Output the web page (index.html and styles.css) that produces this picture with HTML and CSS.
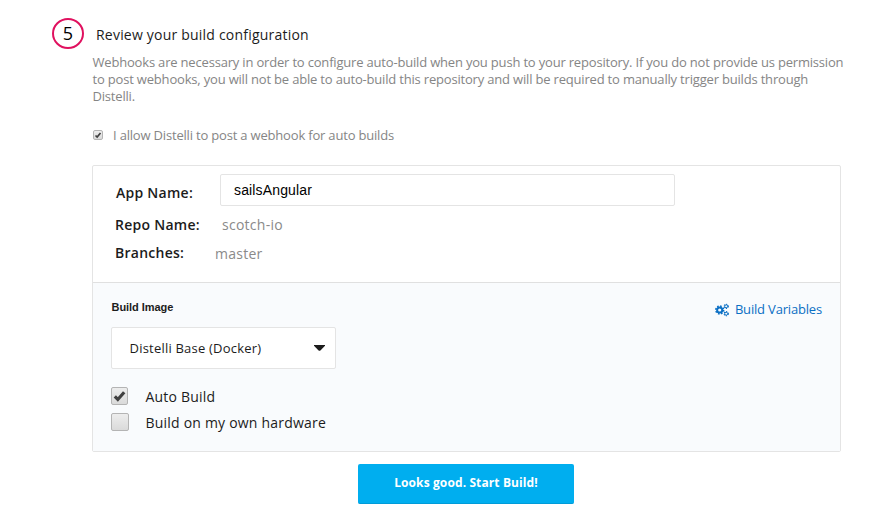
FILE: index.html
```html
<!DOCTYPE html>
<html lang="en">
<head>
<meta charset="utf-8">
<title>Build configuration</title>
<link rel="stylesheet" href="styles.css">
</head>
<body>
<main class="step">
  <header class="step-head">
    <span class="step-number">5</span>
    <h1 class="step-title">Review your build configuration</h1>
  </header>
  <div class="content">
    <p class="intro">Webhooks are necessary in order to configure auto-build when you push to your repository. If you do not provide us permission<br>to post webhooks, you will not be able to auto-build this repository and will be required to manually trigger builds through<br>Distelli.</p>
    <div class="allow">
      <span class="check check-small"><svg viewBox="0 0 16 16"><path d="M3 9 6.3 12.2 13 4"/></svg></span>
      <span>I allow Distelli to post a webhook for auto builds</span>
    </div>
    <section class="panel">
      <div class="details">
        <div class="row row-app"><span class="label">App Name:</span><div class="field">sailsAngular</div></div>
        <div class="row row-repo"><span class="label">Repo Name:</span><span class="value">scotch-io</span></div>
        <div class="row row-branch"><span class="label">Branches:</span><span class="value">master</span></div>
      </div>
      <div class="options">
        <div class="options-head">
          <span class="caption">Build Image</span>
          <a class="variables"><svg class="gears" viewBox="0 0 14 14"><circle class="teeth" cx="4.7" cy="7" r="3.9"/><circle class="ring" cx="4.7" cy="7" r="2.6"/><circle class="teeth-small" cx="11.2" cy="3.3" r="2.1"/><circle class="ring-small" cx="11.2" cy="3.3" r="1.5"/><circle class="teeth-small" cx="11.2" cy="10.7" r="2.1"/><circle class="ring-small" cx="11.2" cy="10.7" r="1.5"/></svg><span>Build Variables</span></a>
        </div>
        <div class="select"><span>Distelli Base (Docker)</span><svg class="caret" viewBox="0 0 11 6"><path d="M0 0H11V.8L6.4 5.4Q5.5 6.2 4.6 5.4L0 .8Z"/></svg></div>
        <div class="option option-auto"><span class="check"><svg viewBox="0 0 16 16"><path d="M3 8.5 6.2 11.7 13 4"/></svg></span><span>Auto Build</span></div>
        <div class="option option-own"><span class="check check-empty"></span><span>Build on my own hardware</span></div>
      </div>
    </section>
    <button class="start">Looks good. Start Build!</button>
  </div>
</main>
</body>
</html>
```

FILE: styles.css
```css
* { box-sizing: border-box; }
body {
  margin: 0;
  background: #fff;
  color: #1c1c1c;
  font-family: "Open Sans", "Noto Sans", sans-serif;
  font-size: 14px;
  letter-spacing: 0.21px;
  white-space: nowrap;
}
.step { padding: 18px 0 0 52px; }
.step-head { display: flex; height: 32px; gap: 12px; }
.step-number {
  width: 32px;
  height: 31px;
  border: 2px solid #e0115f;
  border-radius: 50%;
  font-size: 18px;
  line-height: 27px;
  letter-spacing: 0;
  text-align: center;
  color: #000;
}
.step-title { margin: 0; font-size: 14px; font-weight: 400; line-height: 33px; }
.content { width: 749px; margin-left: 40px; }
.intro {
  margin: 4px 0 0;
  padding-left: 0.5px;
  font-size: 13px;
  line-height: 17px;
  letter-spacing: -0.185px;
  color: #858585;
}
.allow {
  display: flex;
  align-items: center;
  gap: 10px;
  height: 20px;
  margin-top: 20px;
  font-size: 13px;
  letter-spacing: -0.185px;
  color: #858585;
}
.check {
  display: block;
  flex: none;
  width: 17px;
  height: 18px;
  border: 1px solid #b4b4b4;
  border-radius: 2px;
  background: linear-gradient(#ededed, #dadada);
}
.check svg { display: block; width: 100%; height: 100%; }
.check path { fill: none; stroke: #404040; stroke-width: 3.4; }
.check-small { width: 10px; height: 10px; margin-left: 1px; }
.check-empty { width: 18px; }
.panel {
  height: 287px;
  margin-top: 20px;
  border: 1px solid #e4e4e4;
  border-radius: 2px;
}
.details { height: 117px; padding: 8px 22px 0; border-bottom: 1px solid #e0e0e0; }
.row { display: flex; line-height: 20px; }
.label { font-weight: 600; letter-spacing: 0.26px; }
.value { color: #8a8a8a; letter-spacing: 0.26px; }
.row-app { height: 32px; }
.row-app .label { width: 105px; padding: 9px 0 0 1px; }
.field {
  width: 455px;
  height: 32px;
  padding-left: 13px;
  border: 1px solid #e4e4e4;
  border-radius: 2px;
  font: 14px/30px "Liberation Sans", sans-serif;
  letter-spacing: 0.15px;
  color: #000;
}
.row-repo { margin-top: 9px; }
.row-repo .label { width: 107px; }
.row-branch { margin-top: 8px; }
.row-branch .label { width: 100px; }
.row-branch .value { padding-top: 1px; }
.options { height: 168px; padding: 16px 18px 0; background: #f9fbfd; }
.options-head { display: flex; justify-content: space-between; height: 28px; }
.caption {
  padding-left: 0.5px;
  font: 700 11px/17px "Liberation Sans", sans-serif;
  letter-spacing: -0.05px;
}
.variables {
  display: flex;
  gap: 6px;
  font-size: 13px;
  line-height: 21px;
  letter-spacing: -0.18px;
  color: #0b6fc4;
}
.gears { width: 14px; height: 14px; margin-top: 4px; fill: none; stroke: #0b6fc4; }
.teeth { stroke-width: 1.6; stroke-dasharray: 1.6 1.46; }
.ring { stroke-width: 2; }
.teeth-small { stroke-width: 1.1; stroke-dasharray: 1.1 1.1; }
.ring-small { stroke-width: 1; }
.select {
  display: flex;
  align-items: center;
  justify-content: space-between;
  width: 225px;
  height: 42px;
  padding: 0 10px 0 17.5px;
  border: 1px solid #e4e4e4;
  border-radius: 2px;
  background: #fff;
  font-size: 13px;
}
.caret { width: 11px; height: 6px; fill: #1c1c1c; }
.option { display: flex; align-items: center; height: 20px; }
.option .check { margin-right: 17.5px; }
.option .check-empty { margin-right: 16.5px; }
.option-auto { margin-top: 17px; }
.option-own { margin-top: 6px; }
.start {
  display: block;
  width: 216px;
  height: 40px;
  margin: 12px 0 0 266px;
  padding: 0 0 3px;
  border: 0;
  border-bottom: 1px solid #009bd8;
  border-radius: 2px;
  background: #00aeef;
  color: #fff;
  font: 700 12px "Open Sans", sans-serif;
  letter-spacing: 0.11px;
}
```
